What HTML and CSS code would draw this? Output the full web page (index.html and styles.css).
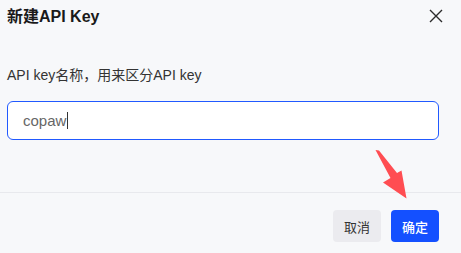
FILE: index.html
```html
<!DOCTYPE html>
<html lang="zh">
<head>
<meta charset="utf-8">
<link rel="stylesheet" href="styles.css">
</head>
<body>
<div class="modal">
  <div class="header">
    <div class="title">新建API Key</div>
    <button class="close" aria-label="关闭">
      <svg width="14" height="14" viewBox="0 0 14 14"><path d="M1 1 L13 13 M13 1 L1 13" stroke="#2b2b2b" stroke-width="1.4" fill="none"/></svg>
    </button>
  </div>
  <div class="body">
    <div class="label">API key名称，用来区分API key</div>
    <div class="input"><span class="value">copaw</span><span class="caret"></span></div>
  </div>
  <div class="divider"></div>
  <div class="footer">
    <button class="btn btn-cancel">取消</button>
    <button class="btn btn-ok">确定</button>
  </div>
  <svg class="arrow" width="40" height="60" viewBox="370 145 40 60">
    <polygon points="375.5,150 379,150.5 397,173 401.5,170.5 406.5,198.5 383,182.5 390.5,178" fill="#ff4d52"/>
  </svg>
</div>
</body>
</html>
```

FILE: styles.css
```css
* { box-sizing: border-box; }
html, body {
  margin: 0;
  padding: 0;
  background: #f7f8fa;
  font-family: "Liberation Sans", "Noto Sans CJK SC", sans-serif;
  color: #1f1f1f;
}
.modal {
  position: relative;
  width: 461px;
  height: 253px;
}
.header {
  display: flex;
  justify-content: space-between;
  align-items: flex-start;
  padding: 5px 18px 0 7px;
  height: 40px;
}
.title {
  font-size: 16px;
  font-weight: bold;
  line-height: 24px;
  color: #1a1a1a;
}
.close {
  border: 0;
  background: transparent;
  padding: 0;
  margin-top: 4px;
  width: 14px;
  height: 14px;
  display: flex;
}
.body {
  padding: 0 22px 0 7px;
}
.label {
  margin-top: 25px;
  font-size: 14px;
  line-height: 20px;
  color: #333;
}
.input {
  margin-top: 16px;
  height: 39px;
  border: 1.5px solid #2159ff;
  border-radius: 6px;
  background: #fff;
  display: flex;
  align-items: center;
  padding-left: 15px;
  font-size: 15px;
  color: #666;
}
.caret {
  width: 1px;
  height: 17px;
  background: #333;
  margin-left: 1px;
}
.divider {
  margin-top: 52px;
  height: 1px;
  background: #e8e9ed;
}
.footer {
  display: flex;
  justify-content: flex-end;
  gap: 10px;
  padding: 17px 22px 0 0;
}
.btn {
  width: 48px;
  height: 32px;
  border: 0;
  border-radius: 4px;
  font-family: "Liberation Sans", "Noto Sans CJK SC", sans-serif;
  font-size: 13px;
  padding: 0;
}
.btn-cancel {
  background: #ebebef;
  color: #333;
}
.btn-ok {
  background: #1450ff;
  color: #fff;
  font-weight: 500;
}
.arrow {
  position: absolute;
  left: 370px;
  top: 145px;
}
```
